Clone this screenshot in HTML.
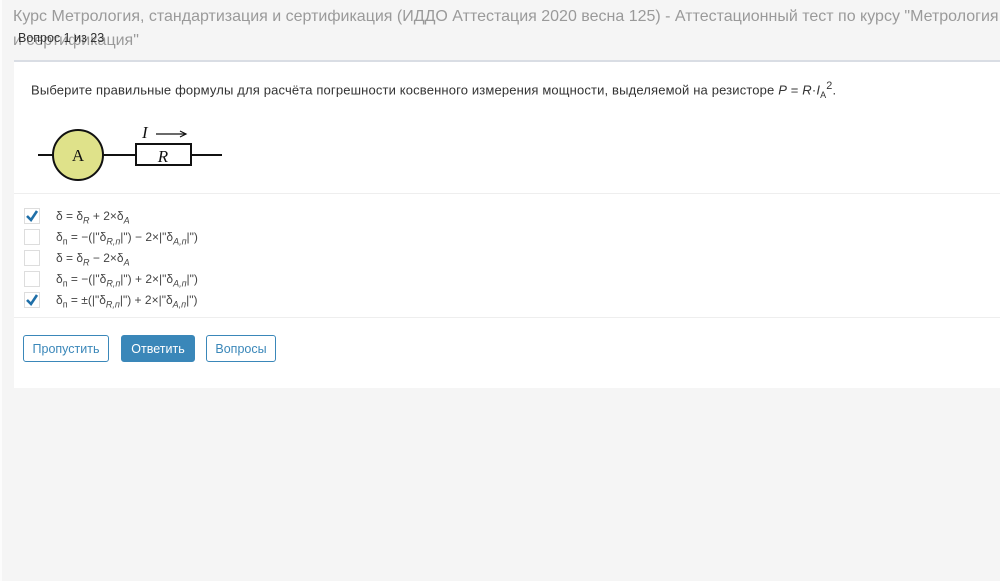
<!DOCTYPE html>
<html><head><meta charset="utf-8"><style>
html,body{margin:0;padding:0;width:1000px;height:581px;overflow:hidden;background:#f5f5f5;font-family:"Liberation Sans","Noto Sans CJK SC",sans-serif;}
.wrap{position:absolute;left:0;top:0;width:1000px;height:581px;overflow:hidden;}
.left{position:absolute;left:0;top:0;width:2px;height:581px;background:#fcfcfc;}
.title{position:absolute;left:13px;top:5px;width:987px;overflow:hidden;font-size:16px;color:#9a9a9a;line-height:24px;white-space:nowrap;}
.q{position:absolute;left:18px;top:31px;font-size:12.5px;color:#333;}
.card{position:absolute;left:14px;top:60px;width:986px;height:326px;background:#fff;border-top:2px solid #d9dde4;}
.text{position:absolute;left:17px;top:18px;font-size:13px;letter-spacing:0.15px;color:#333;white-space:nowrap;}
.sep{position:absolute;left:0;width:986px;height:1px;background:#eee;}
.row{position:absolute;left:10px;height:20px;font-size:12px;color:#444;}
.cb{position:absolute;left:0;top:0;width:14px;height:14px;border:1px solid #ddd;background:#fff;}
.lbl{position:absolute;left:32px;top:0;white-space:nowrap;line-height:16px;}
sub{font-size:9px;font-style:italic;}
.btn{position:absolute;top:273px;height:27px;border:1px solid #3a87b9;border-radius:3px;font-size:12.5px;color:#3a87b9;text-align:center;line-height:27px;box-sizing:border-box;}
</style></head><body><div class="wrap">
<div class="left"></div>
<div class="title">Курс Метрология, стандартизация и сертификация (ИДДО Аттестация 2020 весна 125) - Аттестационный тест по курсу "Метрология, стандартизация<br>и сертификация"</div>
<div class="card">
<div class="text">Выберите правильные формулы для расчёта погрешности косвенного измерения мощности, выделяемой на резисторе <i>P</i> = <i>R</i>·<i>I</i><sub style="font-style:normal">A</sub><sup>2</sup>.</div>
<svg style="position:absolute;left:0;top:0" width="240" height="130">
<line x1="24" y1="93" x2="40" y2="93" stroke="#111" stroke-width="2"/>
<circle cx="64" cy="93" r="25" fill="#dfe28a" stroke="#111" stroke-width="2"/>
<text x="64" y="99" font-family="Liberation Serif" font-size="17" text-anchor="middle" fill="#111">A</text>
<line x1="89" y1="93" x2="122" y2="93" stroke="#111" stroke-width="2"/>
<rect x="122" y="82" width="55" height="21" fill="#fff" stroke="#111" stroke-width="2"/>
<text x="149" y="100" font-family="Liberation Serif" font-style="italic" font-size="17" text-anchor="middle" fill="#111">R</text>
<line x1="177" y1="93" x2="208" y2="93" stroke="#111" stroke-width="2"/>
<text x="128" y="76" font-family="Liberation Serif" font-style="italic" font-size="17" fill="#111">I</text>
<line x1="142" y1="72" x2="172" y2="72" stroke="#111" stroke-width="1.2"/>
<path d="M166 69 L172 72 L166 75" fill="none" stroke="#111" stroke-width="1.2"/>
</svg>
<div class="sep" style="top:131px"></div>
<div class="row" style="top:146px"><div class="cb"><svg width="14" height="14"><path d="M2 7 L6 11 L12 2" fill="none" stroke="#1f6fa8" stroke-width="2.6"/></svg></div><div class="lbl">δ = δ<sub>R</sub> + 2×δ<sub>A</sub></div></div>
<div class="row" style="top:167px"><div class="cb"></div><div class="lbl">δ<sub style="font-style:normal">п</sub> = −(|"δ<sub>R,п</sub>|") − 2×|"δ<sub>A,п</sub>|")</div></div>
<div class="row" style="top:188px"><div class="cb"></div><div class="lbl">δ = δ<sub>R</sub> − 2×δ<sub>A</sub></div></div>
<div class="row" style="top:209px"><div class="cb"></div><div class="lbl">δ<sub style="font-style:normal">п</sub> = −(|"δ<sub>R,п</sub>|") + 2×|"δ<sub>A,п</sub>|")</div></div>
<div class="row" style="top:230px"><div class="cb"><svg width="14" height="14"><path d="M2 7 L6 11 L12 2" fill="none" stroke="#1f6fa8" stroke-width="2.6"/></svg></div><div class="lbl">δ<sub style="font-style:normal">п</sub> = ±(|"δ<sub>R,п</sub>|") + 2×|"δ<sub>A,п</sub>|")</div></div>
<div class="sep" style="top:255px"></div>
<div class="btn" style="left:9px;width:86px">Пропустить</div>
<div class="btn" style="left:107px;width:74px;background:#3a87b9;color:#fff">Ответить</div>
<div class="btn" style="left:192px;width:70px">Вопросы</div>
</div>
<div class="q">Вопрос 1 из 23</div>
</div></body></html>
